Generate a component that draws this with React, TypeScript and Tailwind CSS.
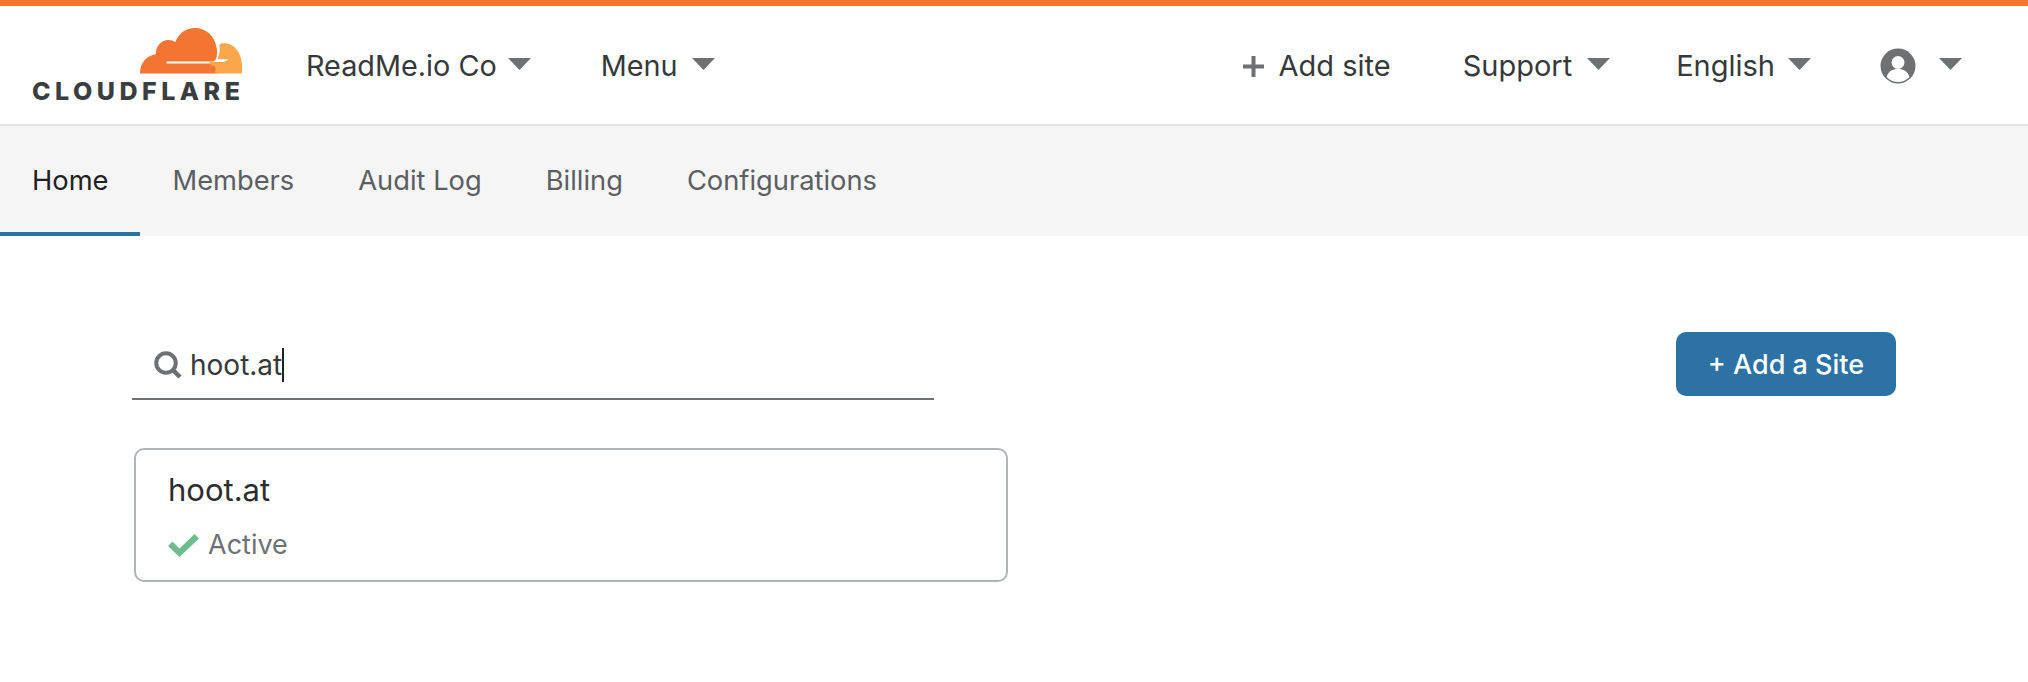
import React from 'react';

const Caret: React.FC<{ className?: string }> = ({ className }) => (
  <svg width="23" height="12" viewBox="0 0 23 12" className={className}>
    <path d="M0 0h23L11.5 12z" fill="#6d7174" />
  </svg>
);

// Cloud logo mark
const CloudMark: React.FC = () => (
  <svg width="102" height="46" viewBox="0 0 104 48" preserveAspectRatio="none">
    <path
      d="M0 47.500c0-11 7-19 16-20 0-9 6-15 13-15 3 0 5 1 7 2C40 5 47 0 56 0c11 0 20 8 22 20 1 4 1 9-1 13l-2 2H27v2h46c4 0 6 3 7 6 0 2 0 3-1 4.500z"
      fill="#f37531"
    />
    <path
      d="M81 17c2-1 3-1 5-1 10 0 18 10 18 24v7.500H75c2-1 3-5 1-8h-3c-1-2-2-3-3-4h13c3 0 5-1 7-3H79c2-5 3-10 2-15z"
      fill="#faa74c"
    />
  </svg>
);

const UserIcon: React.FC = () => (
  <svg width="36" height="36" viewBox="0 0 36 36">
    <circle cx="18" cy="18" r="17.500" fill="#6d7174" />
    <circle cx="18" cy="14.500" r="6.500" fill="#fff" />
    <path d="M6.500 29c2-6 6-8 11.500-8s9.500 2 11.500 8c-3 3-7 5-11.500 5s-8.500-2-11.500-5z" fill="#fff" />
  </svg>
);

const PlusIcon: React.FC = () => (
  <svg width="21" height="21" viewBox="0 0 21 21">
    <path d="M8.500 0h4v8.500H21v4h-8.500V21h-4v-8.500H0v-4h8.500z" fill="#6d7174" />
  </svg>
);

const SearchIcon: React.FC = () => (
  <svg width="28" height="28" viewBox="0 0 28 28" fill="none" stroke="#6d7174">
    <circle cx="12" cy="12" r="9.750" strokeWidth="4" />
    <path d="M18.500 18.500l7.500 7.500" strokeWidth="4.500" />
  </svg>
);

const CheckIcon: React.FC = () => (
  <svg width="31" height="23" viewBox="0 0 31 23">
    <path d="M0 12l4.500-4.500 7 7L26.500 0 31 4.500 11.500 23z" fill="#6fbd8c" />
  </svg>
);

const tabs = ['Home', 'Members', 'Audit Log', 'Billing', 'Configurations'];

const App: React.FC = () => {
  return (
    <div className="w-[2028px] h-[682px] bg-white overflow-hidden font-['Inter',sans-serif] text-[#36393a]">
      <div className="h-[6px] bg-[#f37531]" />

      {/* Header */}
      <header className="h-[120px] flex items-center justify-between border-b-2 border-[#e5e5e5] bg-white">
        <div className="flex items-center">
          <div className="w-[210px] ml-[32px] -mt-[2px] flex flex-col items-end">
            <CloudMark />
            <div className="w-[210px] h-[20px] mt-[7px] flex items-center font-extrabold text-[25px] leading-[20px] tracking-[4.500px] text-[#3b3e40] whitespace-nowrap">
              CLOUDFLARE
            </div>
          </div>
          <div className="flex items-center ml-[64px] pt-[2px] text-[28.800px] leading-[40px]">
            <span>ReadMe.io Co</span>
            <Caret className="ml-[11px] -mt-[4px]" />
          </div>
          <div className="flex items-center ml-[70px] pt-[2px] text-[28.800px] leading-[40px]">
            <span>Menu</span>
            <Caret className="ml-[14px] -mt-[4px]" />
          </div>
        </div>
        <div className="flex items-center pt-[2px] text-[29px] leading-[40px] pr-[66px]">
          <div className="flex items-center">
            <PlusIcon />
            <span className="ml-[15px]">Add site</span>
          </div>
          <div className="flex items-center ml-[72px]">
            <span>Support</span>
            <Caret className="ml-[15px] -mt-[4px]" />
          </div>
          <div className="flex items-center ml-[66px]">
            <span>English</span>
            <Caret className="ml-[13px] -mt-[4px]" />
          </div>
          <div className="flex items-center ml-[69px]">
            <UserIcon />
            <Caret className="ml-[23px] -mt-[4px]" />
          </div>
        </div>
      </header>

      {/* Tabs */}
      <nav className="h-[110px] bg-[#f5f5f5] flex text-[27.300px]">
        {tabs.map((tab, i) => (
          <div
            key={tab}
            className={`h-full flex items-center px-[32px] pt-[4px] border-b-4 ${
              i === 0 ? 'border-[#2c72a5] text-[#1f2122]' : 'border-transparent text-[#5b5f62]'
            }`}
          >
            {tab}
          </div>
        ))}
      </nav>

      {/* Content */}
      <main className="flex justify-between pl-[132px] pr-[132px] pt-[96px]">
        <div>
          <div className="w-[802px] h-[68px] border-b-2 border-[#6d7174] flex items-center pl-[22px]">
            <SearchIcon />
            <span className="ml-[8px] text-[28px] text-[#36393a]">hoot.at</span>
            <span className="w-[2px] h-[34px] bg-[#1f2122]" />
          </div>
          <div className="w-[874px] h-[134px] ml-[2px] mt-[48px] border-2 border-[#b0b5b8] rounded-[10px] pl-[32px] pt-[20px]">
            <div className="text-[31px] leading-[40px] text-[#2b2d2e]">hoot.at</div>
            <div className="flex items-center mt-[19px]">
              <CheckIcon />
              <span className="ml-[9px] text-[27px] leading-[32px] text-[#6d7174]">Active</span>
            </div>
          </div>
        </div>
        <button className="w-[220px] h-[64px] pt-[2px] bg-[#2c72a5] rounded-[10px] text-white text-[27px] font-medium">
          + Add a Site
        </button>
      </main>
    </div>
  );
};

export default App;
